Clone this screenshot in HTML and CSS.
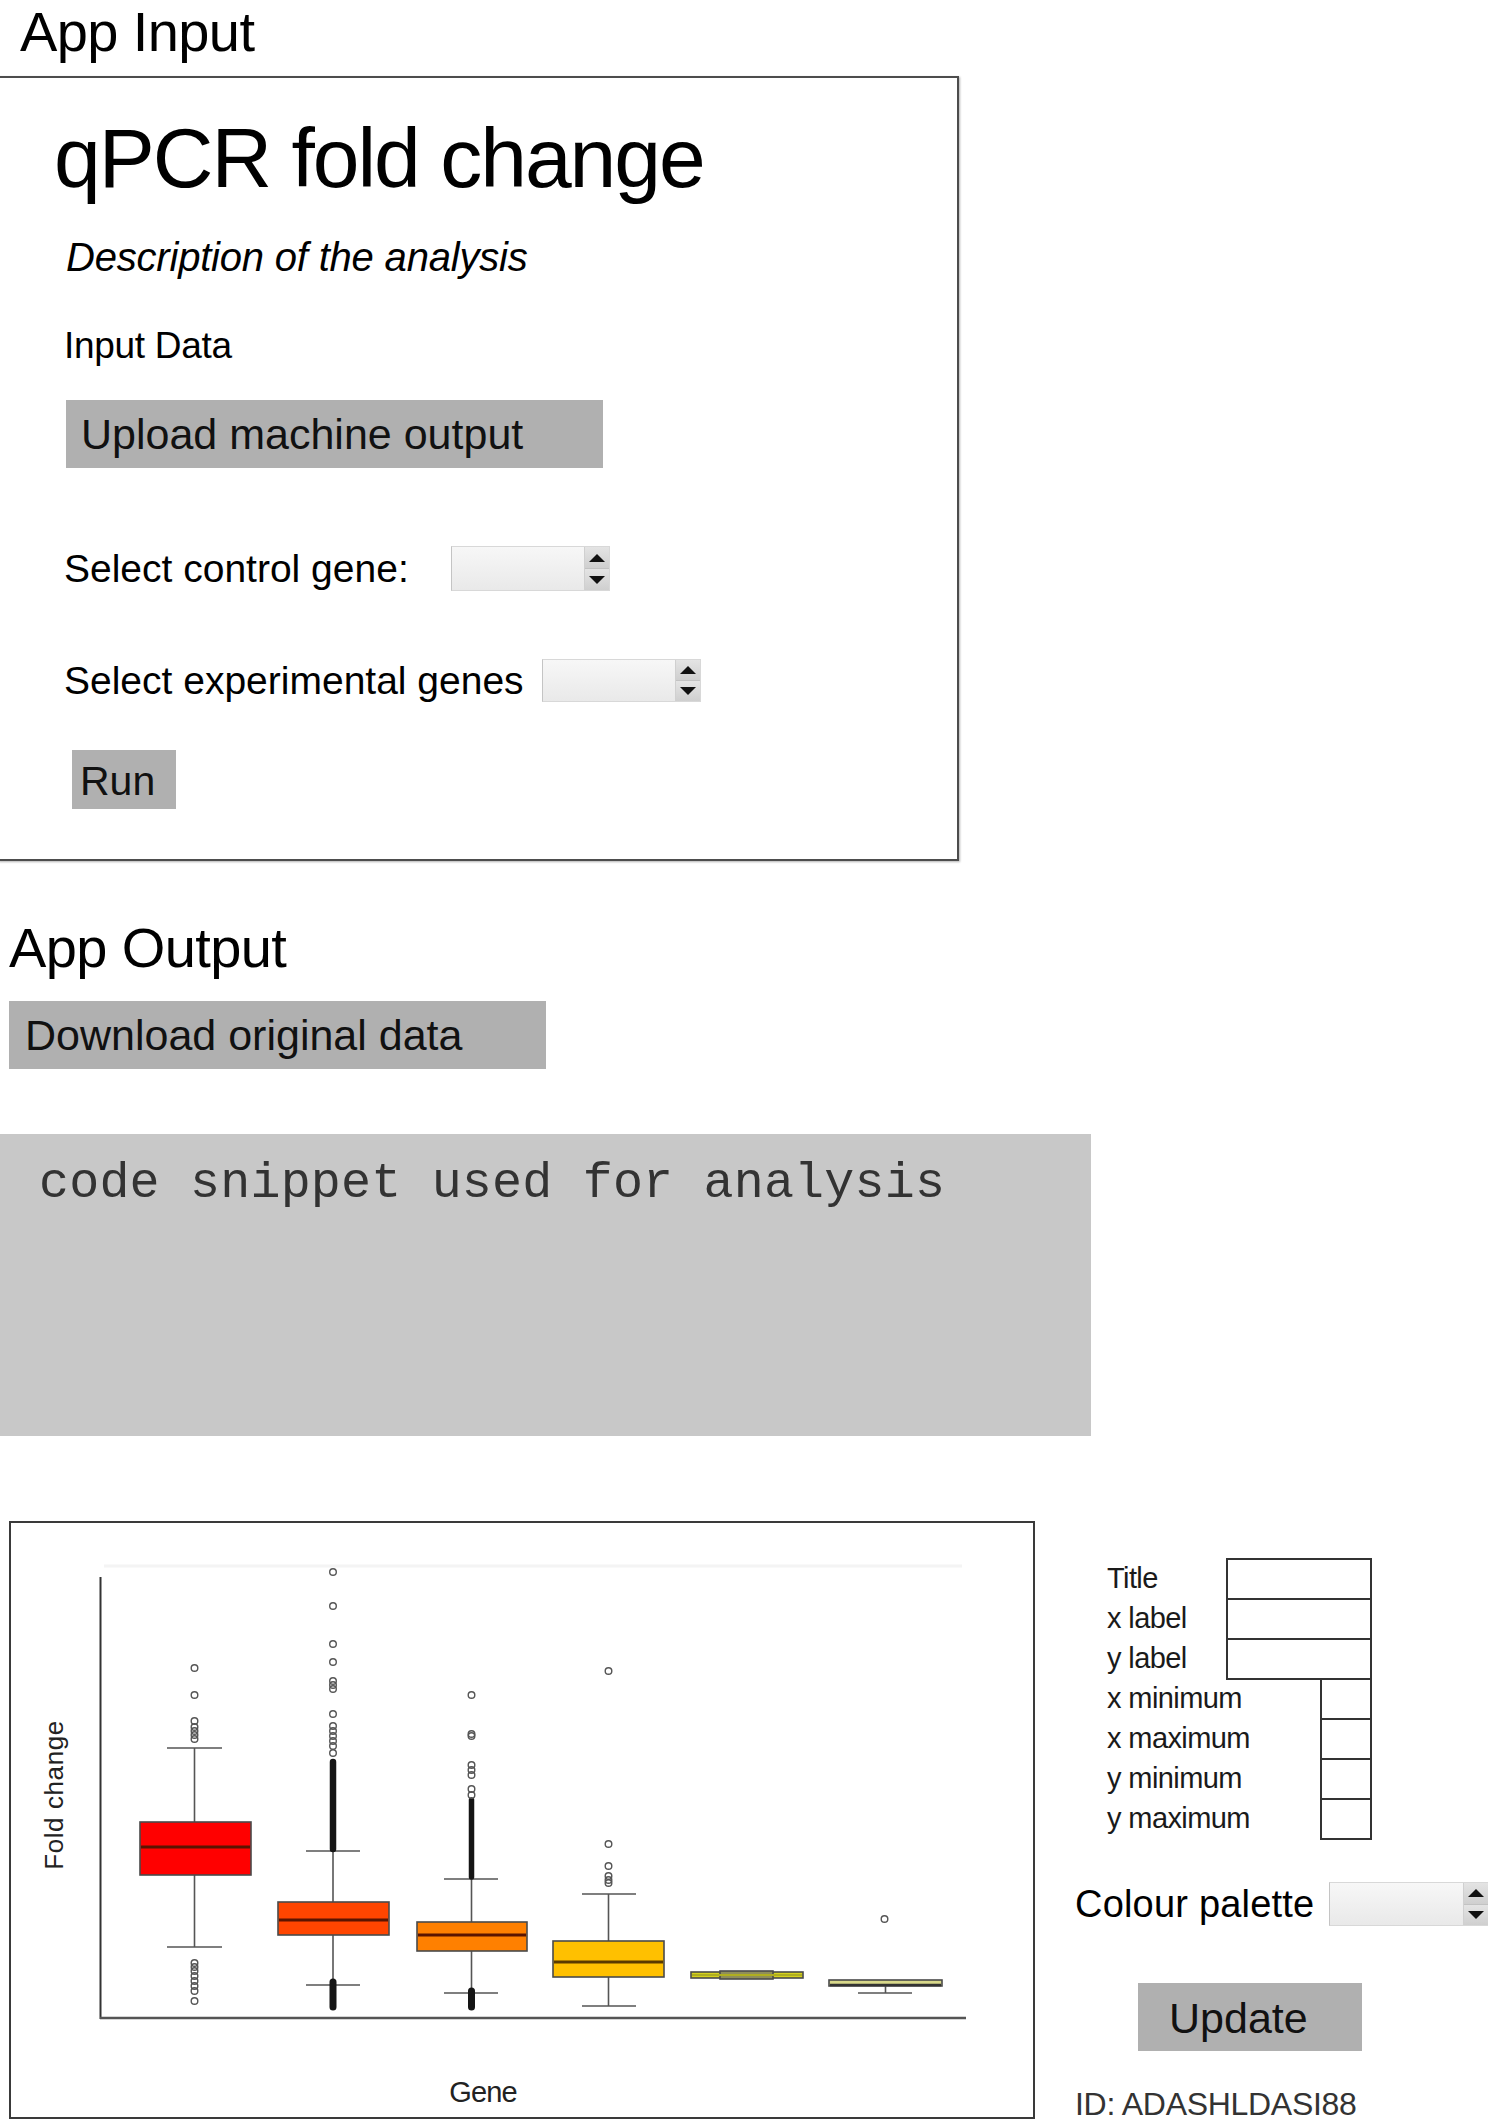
FILE: index.html
```html
<!DOCTYPE html>
<html lang="en">
<head>
<meta charset="utf-8">
<title>qPCR fold change</title>
<link rel="stylesheet" href="styles.css">
</head>
<body>
<div class="page">
  <h2 class="section-title title-input">App Input</h2>
  <section class="input-card">
    <h1 class="app-title">qPCR fold change</h1>
    <p class="desc">Description of the analysis</p>
    <div class="label-input">Input Data</div>
    <div class="btn btn-upload">Upload machine output</div>
    <div class="select-row row-control">
      <span class="lbl">Select control gene:</span>
      <span class="spin"><span class="spin-field"></span><span class="spin-btns"><span class="spin-up"><i class="tri-up"></i></span><span class="spin-down"><i class="tri-down"></i></span></span></span>
    </div>
    <div class="select-row row-exp">
      <span class="lbl">Select experimental genes</span>
      <span class="spin"><span class="spin-field"></span><span class="spin-btns"><span class="spin-up"><i class="tri-up"></i></span><span class="spin-down"><i class="tri-down"></i></span></span></span>
    </div>
    <div class="btn btn-run">Run</div>
  </section>

  <h2 class="section-title title-output">App Output</h2>
  <div class="btn btn-download">Download original data</div>
  <pre class="code">code snippet used for analysis</pre>

  <div class="bottom">
    <div class="plot">
      <svg width="1022" height="594" viewBox="11 1525 1022 594">
        <line x1="104" y1="1568" x2="962" y2="1568" stroke="#f4f4f4" stroke-width="3"/>
        <line x1="100.5" y1="1579" x2="100.5" y2="2021" stroke="#333" stroke-width="2"/>
        <line x1="100" y1="2020" x2="966" y2="2020" stroke="#555" stroke-width="2.5"/>
        <text x="63" y="1797" class="axis-y" transform="rotate(-90 63 1797)" text-anchor="middle">Fold change</text>
        <text x="483" y="2104" class="axis-x" text-anchor="middle">Gene</text>

        <g stroke="#555" stroke-width="1.6" fill="none">
          <line x1="194.5" y1="1750" x2="194.5" y2="1824"/>
          <line x1="194.5" y1="1877" x2="194.5" y2="1949"/>
          <line x1="167" y1="1750" x2="222" y2="1750"/>
          <line x1="167" y1="1949" x2="222" y2="1949"/>
          <line x1="333" y1="1853" x2="333" y2="1904"/>
          <line x1="333" y1="1937" x2="333" y2="1987"/>
          <line x1="306" y1="1853" x2="360" y2="1853"/>
          <line x1="306" y1="1987" x2="360" y2="1987"/>
          <line x1="471.5" y1="1881" x2="471.5" y2="1924"/>
          <line x1="471.5" y1="1953" x2="471.5" y2="1995"/>
          <line x1="444" y1="1881" x2="498" y2="1881"/>
          <line x1="444" y1="1995" x2="498" y2="1995"/>
          <line x1="608.5" y1="1896" x2="608.5" y2="1943"/>
          <line x1="608.5" y1="1979" x2="608.5" y2="2008"/>
          <line x1="582" y1="1896" x2="636" y2="1896"/>
          <line x1="582" y1="2008" x2="636" y2="2008"/>
          <line x1="885.5" y1="1988" x2="885.5" y2="1995"/>
          <line x1="858" y1="1995" x2="912" y2="1995"/>
        </g>

        <g stroke="#151515" stroke-linecap="round">
          <line x1="333" y1="1764" x2="333" y2="1851" stroke-width="6.5"/>
          <line x1="333" y1="1984" x2="333" y2="2009" stroke-width="7"/>
          <line x1="471.5" y1="1802" x2="471.5" y2="1879" stroke-width="5.5"/>
          <line x1="471.5" y1="1993" x2="471.5" y2="2009" stroke-width="7"/>
        </g>

        <g stroke="#555" stroke-width="1.4" fill="none">
          <circle cx="194.5" cy="1670" r="3.3"/>
          <circle cx="194.5" cy="1697" r="3.3"/>
          <circle cx="194.5" cy="1723" r="3.3"/>
          <circle cx="194.5" cy="1729" r="3.3"/>
          <circle cx="194.5" cy="1733" r="3.3"/>
          <circle cx="194.5" cy="1737" r="3.3"/>
          <circle cx="194.5" cy="1741" r="3.3"/>
          <circle cx="194.5" cy="1965" r="3.3"/>
          <circle cx="194.5" cy="1969" r="3.3"/>
          <circle cx="194.5" cy="1973" r="3.3"/>
          <circle cx="194.5" cy="1978" r="3.3"/>
          <circle cx="194.5" cy="1983" r="3.3"/>
          <circle cx="194.5" cy="1988" r="3.3"/>
          <circle cx="194.5" cy="1993" r="3.3"/>
          <circle cx="194.5" cy="2003" r="3.3"/>
          <circle cx="333" cy="1574" r="3.3"/>
          <circle cx="333" cy="1608" r="3.3"/>
          <circle cx="333" cy="1646" r="3.3"/>
          <circle cx="333" cy="1664" r="3.3"/>
          <circle cx="333" cy="1683" r="3.3"/>
          <circle cx="333" cy="1687" r="3.3"/>
          <circle cx="333" cy="1691" r="3.3"/>
          <circle cx="333" cy="1716" r="3.3"/>
          <circle cx="333" cy="1728" r="3.3"/>
          <circle cx="333" cy="1733" r="3.3"/>
          <circle cx="333" cy="1738" r="3.3"/>
          <circle cx="333" cy="1743" r="3.3"/>
          <circle cx="333" cy="1748" r="3.3"/>
          <circle cx="333" cy="1755" r="3.3"/>
          <circle cx="471.5" cy="1697" r="3.3"/>
          <circle cx="471.5" cy="1736" r="3.3"/>
          <circle cx="471.5" cy="1738" r="3.3"/>
          <circle cx="471.5" cy="1767" r="3.3"/>
          <circle cx="471.5" cy="1772" r="3.3"/>
          <circle cx="471.5" cy="1777" r="3.3"/>
          <circle cx="471.5" cy="1791" r="3.3"/>
          <circle cx="471.5" cy="1797" r="3.3"/>
          <circle cx="608.5" cy="1673" r="3.3"/>
          <circle cx="608.5" cy="1846" r="3.3"/>
          <circle cx="608.5" cy="1868" r="3.3"/>
          <circle cx="608.5" cy="1878" r="3.3"/>
          <circle cx="608.5" cy="1882" r="3.3"/>
          <circle cx="608.5" cy="1885" r="3.3"/>
          <circle cx="884.5" cy="1921" r="3.3"/>
        </g>

        <g stroke="#4a4a4a" stroke-width="1.6">
          <rect x="140" y="1824" width="111" height="53" fill="#ff0000"/>
          <rect x="278" y="1904" width="111" height="33" fill="#ff4500"/>
          <rect x="417" y="1924" width="110" height="29" fill="#ff8000"/>
          <rect x="553" y="1943" width="111" height="36" fill="#ffc000"/>
          <rect x="691" y="1974" width="112" height="6" fill="#d6d21c"/>
          <rect x="720" y="1973" width="53" height="8" fill="#8f8e5a"/>
          <rect x="829" y="1982" width="113" height="6" fill="#d8d88a"/>
        </g>
        <g stroke="#5a1400" stroke-width="3">
          <line x1="141" y1="1849" x2="250" y2="1849"/>
          <line x1="279" y1="1922" x2="388" y2="1922"/>
          <line x1="418" y1="1937" x2="526" y2="1937"/>
          <line x1="554" y1="1964" x2="663" y2="1964" stroke="#5a3a00"/>
          <line x1="692" y1="1977" x2="802" y2="1977" stroke="#b0ae20" stroke-width="2"/>
          <line x1="830" y1="1987" x2="941" y2="1987" stroke="#333" stroke-width="2.5"/>
        </g>
      </svg>
    </div>

    <aside class="panel">
      <div class="fields">
        <span class="f-label">Title</span><span class="field wide"></span>
        <span class="f-label">x label</span><span class="field wide"></span>
        <span class="f-label">y label</span><span class="field wide"></span>
        <span class="f-label">x minimum</span><span class="field narrow"></span>
        <span class="f-label">x maximum</span><span class="field narrow"></span>
        <span class="f-label">y minimum</span><span class="field narrow"></span>
        <span class="f-label">y maximum</span><span class="field narrow"></span>
      </div>
      <div class="select-row row-palette">
        <span class="lbl">Colour palette</span>
        <span class="spin"><span class="spin-field"></span><span class="spin-btns"><span class="spin-up"><i class="tri-up"></i></span><span class="spin-down"><i class="tri-down"></i></span></span></span>
      </div>
      <div class="btn btn-update">Update</div>
      <div class="ident">ID: ADASHLDASI88</div>
    </aside>
  </div>
</div>
</body>
</html>
```

FILE: styles.css
```css
* { box-sizing: border-box; }

html, body {
  margin: 0;
  padding: 0;
  background: #fff;
}

body {
  width: 1488px;
  height: 2124px;
  overflow: hidden;
  font-family: "Liberation Sans", Arial, sans-serif;
  color: #000;
}

.section-title {
  margin: 0;
  font-weight: normal;
  font-size: 56px;
  line-height: 52px;
  letter-spacing: -0.6px;
}

.title-input {
  margin-left: 20px;
  line-height: 63px;
  margin-bottom: 13px;
}

.input-card {
  width: 961px;
  margin-left: -2px;
  border: 2px solid #4d4d4d;
  box-shadow: 1px 1px 2px rgba(0, 0, 0, 0.3);
  padding: 38px 0 50px 64px;
}

.app-title {
  margin: 0 0 0 -10px;
  font-weight: normal;
  font-size: 84px;
  line-height: 84px;
  letter-spacing: -2px;
}

.desc {
  margin: 38px 0 0 2px;
  font-style: italic;
  font-size: 40px;
  line-height: 39px;
  letter-spacing: -0.2px;
}

.label-input {
  margin: 51px 0 0 0;
  font-size: 37px;
  line-height: 36px;
  letter-spacing: -0.3px;
}

.btn {
  background: #b0b0b0;
  color: #111;
  font-size: 43px;
  height: 68px;
  line-height: 68px;
  white-space: nowrap;
}

.btn-upload {
  width: 537px;
  margin: 36px 0 0 2px;
  padding-left: 15px;
}

.select-row {
  display: flex;
  align-items: center;
  font-size: 39px;
  white-space: nowrap;
}

.select-row .lbl { flex: none; }

.row-control { height: 45px; margin-top: 78px; }
.row-control .lbl { width: 387px; }
.row-control .spin { height: 45px; }

.row-exp { height: 43px; margin-top: 68px; }
.row-exp .lbl { width: 478px; }
.row-exp .spin { height: 43px; }

.spin {
  flex: none;
  display: flex;
  width: 159px;
  border: 1px solid #d8d8d8;
  border-left-color: #c4c4c4;
  background: linear-gradient(#f7f7f7, #e9e9e9);
}

.spin-field { flex: 1; }

.spin-btns {
  width: 25px;
  display: flex;
  flex-direction: column;
  border-left: 1px solid #d0d0d0;
}

.spin-up,
.spin-down {
  flex: 1;
  display: flex;
  align-items: center;
  justify-content: center;
  background: linear-gradient(#e4e4e4, #cfcfcf);
}

.spin-up { border-bottom: 1px solid #c2c2c2; }

.tri-up,
.tri-down {
  width: 0;
  height: 0;
  border-left: 8px solid transparent;
  border-right: 8px solid transparent;
}

.tri-up { border-bottom: 8px solid #111; }
.tri-down { border-top: 8px solid #111; }

.btn-run {
  width: 104px;
  height: 59px;
  margin: 48px 0 0 8px;
  padding: 4px 0 0 8px;
  font-size: 41px;
  line-height: 55px;
}

.title-output {
  margin-top: 61px;
  margin-left: 9px;
}

.btn-download {
  width: 537px;
  margin: 27px 0 0 9px;
  padding-left: 16px;
}

.code {
  margin: 65px 0 0 0;
  width: 1091px;
  height: 302px;
  background: #c8c8c8;
  padding: 25px 0 0 39px;
  font-family: "Liberation Mono", "Courier New", monospace;
  font-size: 50px;
  line-height: 50px;
  letter-spacing: 0.2px;
  color: #333;
}

.bottom {
  display: flex;
  align-items: flex-start;
  margin-top: 85px;
}

.plot {
  flex: none;
  margin-left: 9px;
  width: 1026px;
  height: 598px;
  border: 2px solid #3a3a3a;
}

.plot svg { display: block; }

.axis-y {
  font-family: "Liberation Sans", Arial, sans-serif;
  font-size: 26px;
  letter-spacing: 0.6px;
  fill: #222;
}

.axis-x {
  font-family: "Liberation Sans", Arial, sans-serif;
  font-size: 29px;
  letter-spacing: -0.8px;
  fill: #222;
}

.panel {
  flex: none;
  margin-left: 40px;
  padding-top: 37px;
  width: 413px;
}

.fields {
  margin-left: 32px;
  display: grid;
  grid-template-columns: 119px 94px 52px;
  grid-auto-rows: 40px;
}

.f-label {
  grid-column: 1;
  font-size: 29px;
  line-height: 40px;
  letter-spacing: -0.6px;
  color: #1a1a1a;
  white-space: nowrap;
}

.field {
  height: 42px;
  border: 2px solid #333;
  background: #fff;
}

.field.wide { grid-column: 2 / 4; }
.field.narrow { grid-column: 3 / 4; }

.row-palette { height: 44px; margin-top: 44px; font-size: 38px; }
.row-palette .lbl { width: 254px; letter-spacing: 0.2px; }
.row-palette .spin { height: 44px; width: 160px; }

.btn-update {
  width: 224px;
  margin: 57px 0 0 63px;
  padding: 2px 0 0 31px;
  font-size: 43px;
  line-height: 66px;
}

.ident {
  margin-top: 37px;
  font-size: 32px;
  line-height: 32px;
  letter-spacing: -0.3px;
  color: #333;
  white-space: nowrap;
}
```
